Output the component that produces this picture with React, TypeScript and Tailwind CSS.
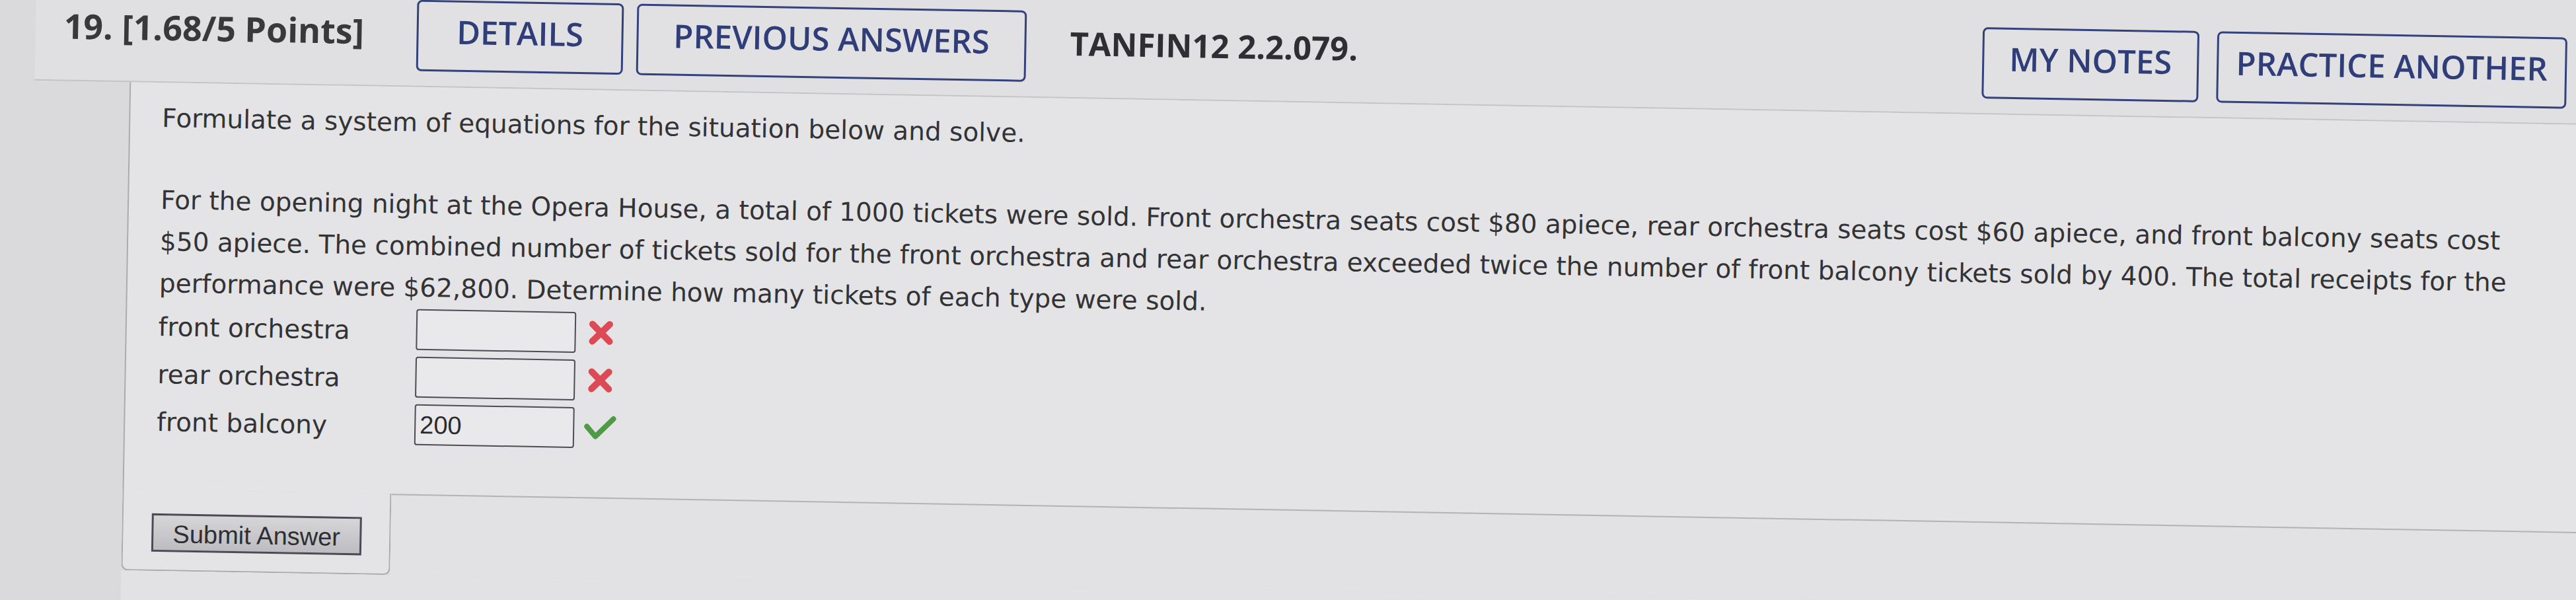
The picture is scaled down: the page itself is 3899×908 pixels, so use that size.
const headerFont = "font-['Open_Sans',sans-serif]";
const bodyFont = "font-['DejaVu_Sans',Verdana,sans-serif]";
const formFont = "font-['Liberation_Sans',Arial,sans-serif]";

function NavButton({ label, width }: { label: string; width: string }) {
  return (
    <button
      className={`${width} ${headerFont} flex h-[108px] shrink-0 items-center justify-center rounded-[8px] border-[3px] border-[#33417c] bg-[#e1e1e3] pb-[12px] text-[49px] font-semibold text-[#2f3d78]`}
    >
      {label}
    </button>
  );
}

function WrongMark() {
  return (
    <svg width="44" height="42" viewBox="0 0 44 42" className="ml-[16px] shrink-0">
      <path d="M9 8 L35 34 M35 8 L9 34" stroke="#db4a55" strokeWidth="10" strokeLinecap="round" fill="none" />
    </svg>
  );
}

function RightMark() {
  return (
    <svg width="50" height="38" viewBox="0 0 50 38" className="ml-[14px] shrink-0">
      <path d="M5 17 L18 32 L45 5" stroke="#4f9a45" strokeWidth="8" strokeLinecap="round" strokeLinejoin="round" fill="none" />
    </svg>
  );
}

function AnswerRow({ label, value, ok }: { label: string; value: string; ok: boolean }) {
  return (
    <div className="flex h-[62px] items-center">
      <span className="w-[390px] shrink-0 pt-[6px] leading-[62px]">{label}</span>
      <input
        readOnly
        defaultValue={value}
        className={`${formFont} h-[62px] w-[242px] shrink-0 rounded-[4px] border-2 border-[#4d4d55] bg-[#e9e9eb] px-[6px] text-[38px] text-[#2b2b2b] outline-none`}
      />
      {ok ? <RightMark /> : <WrongMark />}
    </div>
  );
}

export default function App() {
  return (
    <div className="h-[908px] w-[3899px] overflow-hidden bg-[#dadadc]">
      {/* the photo is tilted by about a degree */}
      <div className="-mt-[92px] -ml-[40px] min-h-[1120px] w-[3980px] origin-top-left rotate-[1deg] bg-[#dadadc] pl-[40px]">
        {/* question header */}
        <div className="flex">
          <div className="w-[56px] shrink-0" />
          <div className="flex h-[212px] flex-1 items-start border-b-2 border-[#c4c4c7] bg-[#e0e0e2] pt-[80px] pl-[43px] pr-[52px]">
            <span className={`${headerFont} mt-[20px] w-[534px] shrink-0 text-[52px] font-bold leading-[56px] text-[#39393c]`}>
              19. [1.68/5 Points]
            </span>
            <NavButton label="DETAILS" width="w-[313px]" />
            <div className="ml-[20px]">
              <NavButton label="PREVIOUS ANSWERS" width="w-[590px]" />
            </div>
            <span className={`${headerFont} mt-[22px] ml-[66px] text-[49px] font-bold leading-[52px] text-[#2f2f33]`}>
              TANFIN12 2.2.079.
            </span>
            <div className="ml-auto flex gap-[27px]">
              <NavButton label="MY NOTES" width="w-[328px]" />
              <NavButton label="PRACTICE ANOTHER" width="w-[530px]" />
            </div>
          </div>
        </div>

        {/* question body */}
        <div className="flex">
          <div className="w-[200px] shrink-0" />
          <div className="flex-1">
            <div className={`${bodyFont} border-l-2 border-[#ababaf] bg-[#e4e4e6] pt-[22px] pb-[74px] pl-[48px] text-[39px] leading-[63px] text-[#333335]`}>
              <p>Formulate a system of equations for the situation below and solve.</p>
              <p className="mt-[61px] whitespace-nowrap">
                For the opening night at the Opera House, a total of 1000 tickets were sold. Front orchestra seats cost $80 apiece, rear orchestra seats cost $60 apiece, and front balcony seats cost
                <br />
                $50 apiece. The combined number of tickets sold for the front orchestra and rear orchestra exceeded twice the number of front balcony tickets sold by 400. The total receipts for the
                <br />
                performance were $62,800. Determine how many tickets of each type were sold.
              </p>
              <div className="mt-[1px] flex flex-col gap-[10px]">
                <AnswerRow label="front orchestra" value="" ok={false} />
                <AnswerRow label="rear orchestra" value="" ok={false} />
                <AnswerRow label="front balcony" value="200" ok={true} />
              </div>
            </div>
            <div className="flex">
              <div className="w-[407px] shrink-0 rounded-b-[10px] border-x-2 border-b-2 border-[#ababaf] bg-[#e4e4e6] pt-[36px] pb-[27px] pl-[43px]">
                <button
                  className={`${formFont} h-[58px] w-[318px] border-[3px] border-[#4b4b55] bg-gradient-to-b from-[#d6d6d9] to-[#bdbdc1] text-[38px] text-[#2e2e33]`}
                >
                  Submit Answer
                </button>
              </div>
              <div className="flex-1 border-t-2 border-[#b3b3b7] bg-[#e2e2e4]" />
            </div>
            <div className="h-[200px] bg-[#e2e2e4]" />
          </div>
        </div>
      </div>
    </div>
  );
}
